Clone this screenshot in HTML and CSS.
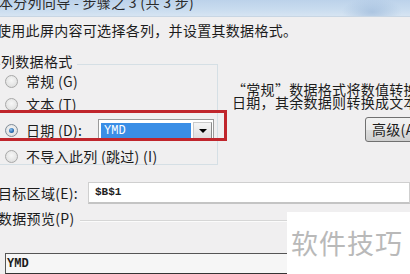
FILE: index.html
```html
<!DOCTYPE html>
<html lang="zh-CN">
<head>
<meta charset="utf-8">
<title>文本分列向导 - 步骤之 3</title>
<link rel="stylesheet" href="styles.css">
</head>
<body>
<div class="titlebar"><span class="title-text">本分列向导 - 步骤之 3 (共 3 步)</span></div>
<div class="intro">使用此屏内容可选择各列，并设置其数据格式。</div>

<div class="main">
  <div class="group">
    <div class="legend">列数据格式</div>
    <div class="opts">
      <div class="opt"><span class="radio"></span><span>常规 (G)</span></div>
      <div class="opt"><span class="radio"></span><span>文本 (T)</span></div>
      <div class="opt opt-date">
        <span class="radio on"></span><span class="date-label">日期 (D):</span>
        <div class="combo">
          <span class="combo-sel">YMD</span>
          <span class="combo-btn"><span class="arrow"></span></span>
        </div>
      </div>
      <div class="opt"><span class="radio"></span><span>不导入此列 (跳过) (I)</span></div>
    </div>
  </div>
  <div class="desc">
    <div class="desc-line">“常规”数据格式将数值转换成数字，日期值会转换成</div>
    <div class="desc-line">日期，其余数据则转换成文本。</div>
    <div class="adv">高级(A)...</div>
  </div>
</div>

<div class="target">
  <span class="target-label">目标区域(E):</span>
  <div class="target-input">$B$1</div>
</div>

<div class="preview-head">
  <span class="preview-label">数据预览(P)</span>
  <span class="rule"></span>
</div>

<div class="preview">
  <span class="preview-cell">YMD</span>
</div>

<div class="highlight"></div>
<div class="watermark">软件技巧</div>
</body>
</html>
```

FILE: styles.css
```css
html, body {
  margin: 0;
  padding: 0;
}
body {
  width: 410px;
  height: 274px;
  overflow: hidden;
  position: relative;
  background: #f0eff0;
  color: #1c1c1c;
  font-family: "Noto Sans CJK SC", "Noto Sans", sans-serif;
  font-size: 14px;
  letter-spacing: 0.3px;
}

.titlebar {
  height: 17px;
  overflow: hidden;
  background:
    radial-gradient(ellipse 30px 14px at 372px 12px, rgba(150, 180, 215, 0.6), rgba(150, 180, 215, 0) 100%),
    linear-gradient(to bottom, #bcd2ea 0%, #c9dcef 60%, #d6e4f2 100%);
  border-bottom: 1px solid #c8d6e4;
  box-sizing: border-box;
}
.title-text {
  display: block;
  margin-top: -5px;
  margin-left: -1px;
  line-height: 14px;
  white-space: nowrap;
  color: #2a2a2a;
}

.intro {
  margin: 5px 0 0 -3px;
  line-height: 16px;
  white-space: nowrap;
}

.main {
  display: flex;
  margin-top: 26px;
}

.group {
  width: 222px;
  flex: none;
  margin-left: -4px;
  box-sizing: border-box;
  border: 1px solid #d5dfe5;
  height: 101px;
}
.legend {
  width: fit-content;
  margin: -12px 0 0 4px;
  padding-right: 4px;
  line-height: 16px;
  background: #f0eff0;
}
.opts {
  display: flex;
  flex-direction: column;
  gap: 7px;
  padding: 4px 0 0 8px;
}
.opt {
  display: flex;
  align-items: center;
  height: 16px;
  line-height: 16px;
  white-space: nowrap;
}
.opt-date {
  height: 22px;
}
.radio {
  width: 11px;
  height: 11px;
  border-radius: 50%;
  border: 1px solid #a8a8a8;
  background: radial-gradient(circle at 50% 40%, #f7f7f7 0%, #e2e2e2 70%, #d2d2d2 100%);
  margin-right: 8px;
  flex: none;
  position: relative;
}
.radio.on {
  border-color: #7f8c99;
}
.radio.on::after {
  content: "";
  position: absolute;
  left: 3px;
  top: 3px;
  width: 5px;
  height: 5px;
  border-radius: 50%;
  background: radial-gradient(circle at 40% 35%, #8fc3f0 0%, #2c6fb5 55%, #17477e 100%);
}
.date-label {
  width: 72px;
}
.combo {
  display: flex;
  width: 116px;
  height: 22px;
  box-sizing: border-box;
  border: 1px solid #9a9a9a;
  background: #fff;
  padding: 2px 1px 1px 2px;
}
.combo-sel {
  flex: 1;
  background: #3a8ee6;
  color: #fff;
  font-family: "Liberation Mono", monospace;
  font-size: 12px;
  line-height: 16px;
  letter-spacing: 0;
  padding-left: 3px;
  margin: 1px 2px 1px 0;
}
.combo-btn {
  width: 19px;
  flex: none;
  box-sizing: border-box;
  border: 1px solid #8a8a8a;
  border-top-color: #c9c9c9;
  border-left-color: #c9c9c9;
  background: linear-gradient(to bottom, #f6f6f6, #dedede);
  display: flex;
  align-items: center;
  justify-content: center;
}
.arrow {
  width: 0;
  height: 0;
  border-left: 4px solid transparent;
  border-right: 4px solid transparent;
  border-top: 4px solid #000;
}

.desc {
  flex: 1;
  min-width: 0;
  padding: 19px 0 0 14px;
}
.desc-line {
  line-height: 13px;
  white-space: nowrap;
}
.adv {
  margin: 8px 0 0 133px;
  width: 72px;
  height: 25px;
  box-sizing: border-box;
  border: 1px solid #707070;
  border-radius: 3px;
  background: linear-gradient(to bottom, #f2f2f2 0%, #ebebeb 50%, #dddddd 51%, #cfcfcf 100%);
  line-height: 23px;
  padding-left: 6px;
  white-space: nowrap;
}

.target {
  display: flex;
  align-items: center;
  margin-top: 17px;
  height: 22px;
}
.target-label {
  width: 90px;
  margin-left: -2px;
  flex: none;
  white-space: nowrap;
}
.target-input {
  flex: 1;
  height: 22px;
  box-sizing: border-box;
  background: #fff;
  border: 1px solid #cfcfcf;
  border-bottom: 2px solid #c4c4c4;
  font-family: "Liberation Mono", monospace;
  font-weight: bold;
  font-size: 11px;
  letter-spacing: 0;
  line-height: 19px;
  padding-left: 6px;
  color: #222;
}

.preview-head {
  display: flex;
  align-items: flex-start;
  margin-top: 6px;
  height: 16px;
}
.preview-label {
  line-height: 16px;
  margin-left: -2px;
  white-space: nowrap;
}
.rule {
  flex: 1;
  margin: 10px 0 0 6px;
  border-top: 1px solid #d6d6d6;
  border-bottom: 1px solid #fbfbfb;
}

.preview {
  margin: 27px 0 0 5px;
  height: 21px;
  box-sizing: border-box;
  border-top: 1px solid #555;
  border-left: 1px solid #555;
  border-bottom: 1px solid #333;
  background: #f6f6f6;
  display: flex;
  align-items: center;
}
.preview-cell {
  font-family: "Liberation Mono", monospace;
  font-size: 12px;
  font-weight: bold;
  letter-spacing: 0;
  color: #1a1a1a;
  padding-left: 1px;
}

/* annotation overlay: red highlight rectangle */
.highlight {
  position: absolute;
  left: -6px;
  top: 110px;
  width: 233px;
  height: 31px;
  box-sizing: border-box;
  border: 3px solid #c0252c;
}

/* watermark overlay */
.watermark {
  position: absolute;
  left: 287px;
  top: 212px;
  width: 123px;
  height: 62px;
  background: #fff;
  color: #b9b9b9;
  font-size: 27px;
  line-height: 62px;
  letter-spacing: 1px;
  padding-left: 4px;
  box-sizing: border-box;
  white-space: nowrap;
}
```
